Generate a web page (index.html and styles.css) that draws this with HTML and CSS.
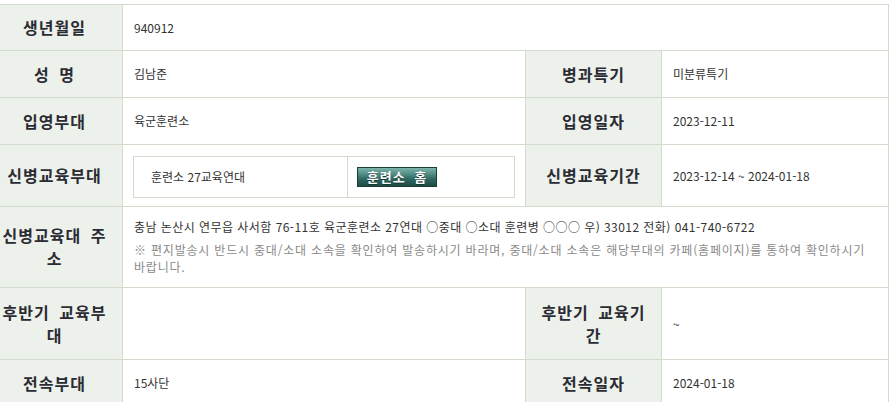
FILE: index.html
```html
<!DOCTYPE html>
<html lang="ko">
<head>
<meta charset="utf-8">
<title>훈련병 정보</title>
<link rel="stylesheet" href="styles.css">
</head>
<body>
<div class="wrap">
<table class="info">
  <colgroup>
    <col class="c-label">
    <col class="c-value">
    <col class="c-label">
    <col class="c-value2">
  </colgroup>
  <tr class="r46">
    <th>생년월일</th>
    <td colspan="3">940912</td>
  </tr>
  <tr class="r47">
    <th>성 명</th>
    <td>김남준</td>
    <th>병과특기</th>
    <td>미분류특기</td>
  </tr>
  <tr class="r47">
    <th>입영부대</th>
    <td>육군훈련소</td>
    <th>입영일자</th>
    <td>2023-12-11</td>
  </tr>
  <tr class="r62">
    <th>신병교육부대</th>
    <td class="boxcell">
      <div class="unitbox">
        <div class="unitname">훈련소 27교육연대</div>
        <div class="unitlink"><span class="homebtn">훈련소 홈</span></div>
      </div>
    </td>
    <th>신병교육기간</th>
    <td>2023-12-14 ~ 2024-01-18</td>
  </tr>
  <tr class="r81">
    <th>신병교육대 주소</th>
    <td colspan="3" class="addr">
      <p class="addr-main">충남 논산시 연무읍 사서함 76-11호 육군훈련소 27연대 ○중대 ○소대 훈련병 ○○○ 우) 33012 전화) 041-740-6722</p>
      <p class="addr-note">※ 편지발송시 반드시 중대/소대 소속을 확인하여 발송하시기 바라며, 중대/소대 소속은 해당부대의 카페(홈페이지)를 통하여 확인하시기 바랍니다.</p>
    </td>
  </tr>
  <tr class="r72">
    <th>후반기 교육부대</th>
    <td></td>
    <th>후반기 교육기간</th>
    <td>~</td>
  </tr>
  <tr class="r47">
    <th>전속부대</th>
    <td>15사단</td>
    <th>전속일자</th>
    <td>2024-01-18</td>
  </tr>
</table>
</div>
</body>
</html>
```

FILE: styles.css
```css
html, body {
  margin: 0;
  padding: 0;
  background: #ffffff;
}

.wrap {
  padding-top: 4px;
  margin-left: -14px;
}

.info {
  border-collapse: collapse;
  table-layout: fixed;
  width: 902px;
  font-family: "Noto Sans CJK KR", "Noto Sans", sans-serif;
  color: #333333;
}

.c-label { width: 136px; }
.c-value { width: 403px; }
.c-value2 { width: 227px; }

.info th,
.info td {
  border: 1px solid #d3dbcc;
  vertical-align: middle;
}

.info th {
  background: #edf1eb;
  font-size: 16px;
  font-weight: bold;
  letter-spacing: 1px;
  word-spacing: 4px;
  line-height: 23px;
  text-align: center;
  padding: 0 8px;
  color: #2b2b33;
}

.info td {
  font-size: 12px;
  line-height: 16px;
  padding: 0 11px;
  text-align: left;
  letter-spacing: 0;
}

.r46 { height: 46px; }
.r47 { height: 47px; }
.r62 { height: 62px; }
.r81 { height: 81px; }
.r72 { height: 72px; }

.info td.boxcell {
  padding: 10px 10px 8px 10px;
}

.unitbox {
  display: flex;
  height: 40px;
  border: 1px solid #d3dbcc;
}

.unitname {
  width: 196px;
  padding-left: 17px;
  display: flex;
  align-items: center;
  border-right: 1px solid #d3dbcc;
}

.unitlink {
  flex: 1;
  padding-left: 9px;
  display: flex;
  align-items: center;
}

.homebtn {
  display: inline-flex;
  align-items: center;
  justify-content: center;
  box-sizing: border-box;
  width: 80px;
  height: 20px;
  border: 1px solid #1b3c38;
  background: linear-gradient(#7db3ab 0%, #4f8c84 35%, #2f6a63 60%, #1e4b46 100%);
  color: #ffffff;
  font-size: 13px;
  font-weight: bold;
  letter-spacing: 1px;
  word-spacing: 4px;
  text-shadow: 0 1px 0 #173532;
}

.info td.addr {
  padding: 10px 11px 12px 11px;
}

.addr p {
  margin: 0;
}

.addr-main {
  line-height: 20px;
  letter-spacing: 0.45px;
}

.addr-note {
  margin-top: 4px !important;
  line-height: 17px;
  color: #8a8a8a;
  letter-spacing: 0.8px;
  word-break: keep-all;
}
```
